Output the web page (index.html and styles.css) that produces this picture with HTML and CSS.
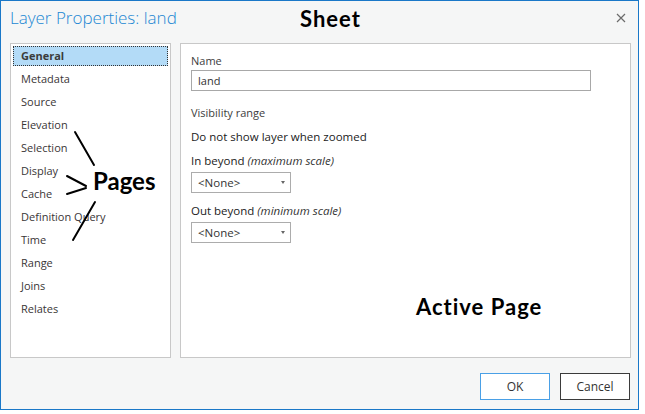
FILE: index.html
```html
<!DOCTYPE html>
<html>
<head>
<meta charset="utf-8">
<link rel="stylesheet" href="styles.css">
</head>
<body>
<div class="window">
  <div class="titlebar">
    <div class="title">Layer Properties: land</div>
    <svg class="close" width="10" height="10" viewBox="0 0 10 10"><path d="M1 1 L9 9 M9 1 L1 9" stroke="#6b6b6b" stroke-width="1.2" fill="none"/></svg>
  </div>
  <div class="content">
    <div class="pages">
      <div class="page selected"><span>General</span></div>
      <div class="page">Metadata</div>
      <div class="page">Source</div>
      <div class="page">Elevation</div>
      <div class="page">Selection</div>
      <div class="page">Display</div>
      <div class="page">Cache</div>
      <div class="page">Definition Query</div>
      <div class="page">Time</div>
      <div class="page">Range</div>
      <div class="page">Joins</div>
      <div class="page">Relates</div>
    </div>
    <div class="active">
      <div class="label">Name</div>
      <div class="input">land</div>
      <div class="label vis">Visibility range</div>
      <div class="text dont">Do not show layer when zoomed</div>
      <div class="text inb">In beyond <i>(maximum scale)</i></div>
      <div class="combo"><span>&lt;None&gt;</span><span class="arrow"></span></div>
      <div class="text outb">Out beyond <i>(minimum scale)</i></div>
      <div class="combo"><span>&lt;None&gt;</span><span class="arrow"></span></div>
    </div>
  </div>
  <div class="footer">
    <div class="btn ok">OK</div>
    <div class="btn">Cancel</div>
  </div>
</div>
<div class="note sheet">Sheet</div>
<div class="note pagesnote">Pages</div>
<div class="note activenote">Active Page</div>
<svg class="pointers" width="645" height="414" viewBox="0 0 645 414">
  <g stroke="#000" stroke-width="2" fill="none" stroke-linecap="round">
    <path d="M75 132 L94 165"/>
    <path d="M67 176 L86 186"/>
    <path d="M67 194 L86 188"/>
    <path d="M95 202 L73 240"/>
  </g>
</svg>
</body>
</html>
```

FILE: styles.css
```css
html, body {
  margin: 0;
  padding: 0;
  background: #ffffff;
}
body {
  width: 645px;
  height: 414px;
  position: relative;
  overflow: hidden;
  font-family: "Open Sans", "Noto Sans", sans-serif;
  font-size: 11.5px;
  color: #333;
}
.window {
  width: 637px;
  height: 408px;
  border: 1px solid #1a78c8;
  background: #f5f6f6;
  display: flex;
  flex-direction: column;
}
.titlebar {
  height: 42px;
  display: flex;
  align-items: flex-start;
  justify-content: space-between;
  padding: 0 12px 0 9px;
}
.title {
  font-size: 17px;
  font-weight: 300;
  color: #2187d3;
  line-height: 20px;
  margin-top: 7px;
}
.close {
  margin-top: 12px;
}
.content {
  display: flex;
  gap: 9px;
  padding-left: 9px;
  height: 315px;
}
.pages {
  width: 159px;
  height: 311px;
  border: 1px solid #c8c8c8;
  background: #fff;
  padding-top: 2px;
  box-sizing: content-box;
}
.page {
  height: 20px;
  line-height: 20px;
  margin: 0 2px 3px 2px;
  padding-left: 8px;
  color: #3a3636;
  white-space: nowrap;
  font-size: 11px;
}
.page.selected {
  background: #b3dbf7;
  border: 1px dotted #333;
  height: 18px;
  line-height: 18px;
  padding-left: 7px;
  font-weight: 700;
  color: #3b3b3b;
}
.active {
  width: 429px;
  height: 304px;
  border: 1px solid #c8c8c8;
  background: #fff;
  padding: 9px 10px 0 10px;
}
.label {
  line-height: 16px;
  color: #3d3d3d;
  font-size: 11px;
}
.input {
  margin-top: 1px;
  width: 392px;
  height: 19px;
  line-height: 19px;
  border: 1px solid #a8a8a8;
  padding-left: 6px;
  color: #333;
  font-size: 11px;
}
.vis {
  margin-top: 14px;
}
.text {
  line-height: 16px;
  color: #1b1b1b;
}
.text i {
  color: #333;
}
.dont { margin-top: 8px; }
.inb { margin-top: 8px; }
.outb { margin-top: 10px; }
.combo {
  margin-top: 3px;
  width: 86px;
  height: 19px;
  line-height: 19px;
  border: 1px solid #acacac;
  padding: 0 6px 0 6px;
  display: flex;
  justify-content: space-between;
  align-items: center;
  color: #333;
}
.arrow {
  width: 0;
  height: 0;
  border-left: 2.5px solid transparent;
  border-right: 2.5px solid transparent;
  border-top: 3px solid #666;
  margin-right: -1px;
}
.footer {
  display: flex;
  justify-content: flex-end;
  gap: 10px;
  padding: 15px 8px 0 0;
}
.btn {
  width: 68px;
  height: 25px;
  line-height: 25px;
  text-align: center;
  border: 1px solid #3b3b3b;
  background: #fff;
  color: #333;
  font-size: 12px;
}
.btn.ok {
  border-color: #4aa0e6;
}
.note {
  position: absolute;
  font-family: Lato, "Open Sans", sans-serif;
  font-weight: 700;
  color: #000;
  line-height: 1;
  white-space: nowrap;
}
.sheet {
  left: 300px;
  top: 8px;
  font-size: 22px;
  letter-spacing: 1px;
}
.pagesnote {
  left: 93px;
  top: 169px;
  font-size: 24px;
}
.activenote {
  left: 416px;
  top: 296px;
  font-size: 22px;
  letter-spacing: 1px;
}
.pointers {
  position: absolute;
  left: 0;
  top: 0;
}
```
